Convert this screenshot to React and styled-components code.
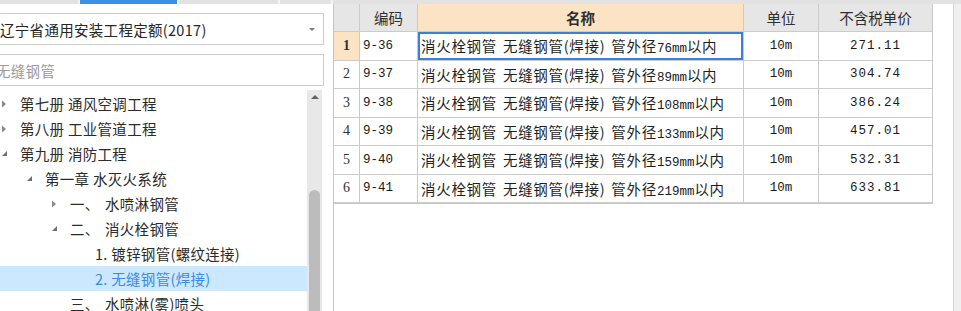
import React from 'react';
import styled, { createGlobalStyle } from 'styled-components';

const GlobalStyle = createGlobalStyle`
  html, body {
    margin: 0;
    padding: 0;
    background: #fff;
  }
  * {
    box-sizing: border-box;
  }
`;

const Page = styled.div`
  width: 961px;
  height: 311px;
  overflow: hidden;
  display: flex;
  flex-direction: column;
  background: #fff;
  font-family: 'Noto Sans CJK SC', sans-serif;
`;

const TabStrip = styled.div`
  height: 4px;
  display: flex;
  background: #e2e2e2;
`;

const Tab = styled.div`
  width: ${(p) => p.$w}px;
  height: 100%;
  background: ${(p) => (p.$active ? '#3d8ee6' : '#e2e2e2')};
  border-right: 2px solid #f4f4f4;
`;

const Body = styled.div`
  flex: 1;
  display: flex;
  min-height: 0;
`;

const LeftPanel = styled.div`
  width: 326px;
  padding-top: 9px;
  display: flex;
  flex-direction: column;
  overflow: hidden;
`;

const Field = styled.div`
  height: 32px;
  width: ${(p) => 324 + p.$shift}px;
  margin-left: -${(p) => p.$shift}px;
  margin-bottom: 9px;
  border: 1px solid #cdcdcd;
  display: flex;
  align-items: center;
  justify-content: space-between;
  padding: 0 7px 0 ${(p) => p.$pad}px;
  font-size: 14.5px;
  letter-spacing: 0.3px;
  color: ${(p) => (p.$muted ? '#9b9b9b' : '#262626')};
  white-space: nowrap;
`;

const Caret = styled.span`
  width: 0;
  height: 0;
  border-left: 3px solid transparent;
  border-right: 3px solid transparent;
  border-top: 3px solid #7a7a7a;
  margin-right: 1px;
`;

const TreeWrap = styled.div`
  flex: 1;
  display: flex;
  margin-top: -5px;
  min-height: 0;
`;

const Tree = styled.div`
  width: 307px;
  padding-top: 1px;
`;

const Node = styled.div`
  height: 25px;
  display: flex;
  align-items: center;
  padding-left: ${(p) => p.$level * 25}px;
  background: ${(p) => (p.$selected ? '#cce8ff' : 'transparent')};
  color: ${(p) => (p.$selected ? '#3d8be0' : '#2b2b2b')};
  font-size: 14.5px;
  letter-spacing: 0.3px;
  white-space: nowrap;
`;

const Toggle = styled.span`
  width: 20px;
  display: flex;
  align-items: center;
  padding-left: 1px;
`;

const Ordinal = styled.span`
  width: 35px;
`;

const ScrollBar = styled.div`
  width: 15px;
  background: #e8e8e8;
  display: flex;
  flex-direction: column;
  align-items: center;
`;

const UpArrow = styled.span`
  margin-top: 5px;
  width: 0;
  height: 0;
  border-left: 4px solid transparent;
  border-right: 4px solid transparent;
  border-bottom: 4px solid #606060;
`;

const Thumb = styled.div`
  margin-top: 91px;
  flex: 1;
  width: 11px;
  border-radius: 6px 6px 0 0;
  background: #bcbcbc;
`;

const Divider = styled.div`
  width: 7px;
`;

const RightPanel = styled.div`
  flex: 1;
  display: flex;
`;

const TableArea = styled.div`
  width: 621px;
  border-left: 1px solid #c6c6c6;
  border-right: 1px solid #d4d4d4;
`;

const Gutter = styled.div`
  flex: 1;
  background: #f0f0f0;
`;

const Grid = styled.div`
  display: grid;
  grid-template-columns: 26px 58px 326px 75px 114px;
  grid-template-rows: 28px repeat(6, 28.5px);
  border-bottom: 1px solid #c8c8c8;
  width: 599px;
`;

const HeadCell = styled.div`
  display: flex;
  align-items: center;
  justify-content: center;
  background: ${(p) => (p.$hot ? '#fce3c4' : '#e6e6e6')};
  border-right: 1px solid #cbcbcb;
  border-bottom: 1px solid #cbcbcb;
  font-size: 14.5px;
  font-weight: ${(p) => (p.$hot ? 700 : 400)};
  color: #2e2e2e;
`;

const Cell = styled.div`
  display: flex;
  align-items: center;
  justify-content: ${(p) => (p.$center ? 'center' : 'flex-start')};
  padding-left: ${(p) => (p.$center ? 0 : 3)}px;
  background: ${(p) => (p.$hot ? '#fce3c4' : '#fff')};
  border-right: 1px solid #cbcbcb;
  border-bottom: 1px solid #cbcbcb;
  box-shadow: ${(p) => (p.$current ? 'inset 0 0 0 2px #3a7fdc' : 'none')};
  font-size: 14.5px;
  color: #1f1f1f;
  white-space: nowrap;
  overflow: hidden;
`;

const NameText = styled.span`
  letter-spacing: 0.7px;
  word-spacing: 2px;
`;

const RowNo = styled(Cell)`
  font-family: 'Liberation Serif', serif;
  font-size: 14px;
  font-weight: ${(p) => (p.$hot ? 700 : 400)};
  color: #333;
`;

const Latin = styled.span`
  font-family: 'Liberation Mono', monospace;
  font-size: 12.5px;
  letter-spacing: ${(p) => (p.$wide ? '1px' : '0')};
  color: #1a1a1a;
`;

function Arrow({ open }) {
  return open ? (
    <svg width="7" height="7" viewBox="0 0 7 7">
      <path d="M6 1 L6 6 L1 6 Z" fill="#6e6e6e" />
    </svg>
  ) : (
    <svg width="6" height="8" viewBox="0 0 6 8">
      <path d="M1 0.5 L5 4 L1 7.5 Z" fill="#8a8a8a" />
    </svg>
  );
}

function Mixed({ text }) {
  return (
    <NameText>
      {text
        .split(/([0-9A-Za-z.\-]+)/)
        .map((part, i) =>
          /^[0-9A-Za-z.\-]+$/.test(part) ? <Latin key={i}>{part}</Latin> : part
        )}
    </NameText>
  );
}

const tree = [
  { level: 0, arrow: 'closed', text: '第七册 通风空调工程' },
  { level: 0, arrow: 'closed', text: '第八册 工业管道工程' },
  { level: 0, arrow: 'open', text: '第九册 消防工程' },
  { level: 1, arrow: 'open', text: '第一章 水灭火系统' },
  { level: 2, arrow: 'closed', ord: '一、', text: '水喷淋钢管' },
  { level: 2, arrow: 'open', ord: '二、', text: '消火栓钢管' },
  { level: 3, text: '1. 镀锌钢管(螺纹连接)' },
  { level: 3, text: '2. 无缝钢管(焊接)', selected: true },
  { level: 2, arrow: 'none', ord: '三、', text: '水喷淋(雾)喷头' }
];

const rows = [
  ['9-36', '76', '271.11'],
  ['9-37', '89', '304.74'],
  ['9-38', '108', '386.24'],
  ['9-39', '133', '457.01'],
  ['9-40', '159', '532.31'],
  ['9-41', '219', '633.81']
];

export default function App() {
  return (
    <Page>
      <GlobalStyle />
      <TabStrip>
        <Tab $w={80} />
        <Tab $w={99} $active />
        <Tab $w={101} />
        <Tab $w={53} />
      </TabStrip>
      <Body>
        <LeftPanel>
          <Field $shift={4} $pad={3}>
            辽宁省通用安装工程定额(2017)
            <Caret />
          </Field>
          <Field $shift={8} $pad={3} $muted>
            无缝钢管
          </Field>
          <TreeWrap>
            <Tree>
              {tree.map((n, i) => (
                <Node key={i} $level={n.level} $selected={n.selected}>
                  <Toggle>
                    {n.arrow && n.arrow !== 'none' && <Arrow open={n.arrow === 'open'} />}
                  </Toggle>
                  {n.ord && <Ordinal>{n.ord}</Ordinal>}
                  {n.text}
                </Node>
              ))}
            </Tree>
            <ScrollBar>
              <UpArrow />
              <Thumb />
            </ScrollBar>
          </TreeWrap>
        </LeftPanel>
        <Divider />
        <RightPanel>
          <TableArea>
            <Grid>
              <HeadCell />
              <HeadCell>编码</HeadCell>
              <HeadCell $hot>名称</HeadCell>
              <HeadCell>单位</HeadCell>
              <HeadCell>不含税单价</HeadCell>
              {rows.map(([code, dia, price], i) => (
                <React.Fragment key={code}>
                  <RowNo $center $hot={i === 0}>
                    {i + 1}
                  </RowNo>
                  <Cell>
                    <Latin>{code}</Latin>
                  </Cell>
                  <Cell $current={i === 0}>
                    <Mixed text={`消火栓钢管 无缝钢管(焊接) 管外径${dia}mm以内`} />
                  </Cell>
                  <Cell $center>
                    <Latin>10m</Latin>
                  </Cell>
                  <Cell $center>
                    <Latin $wide>{price}</Latin>
                  </Cell>
                </React.Fragment>
              ))}
            </Grid>
          </TableArea>
          <Gutter />
        </RightPanel>
      </Body>
    </Page>
  );
}
